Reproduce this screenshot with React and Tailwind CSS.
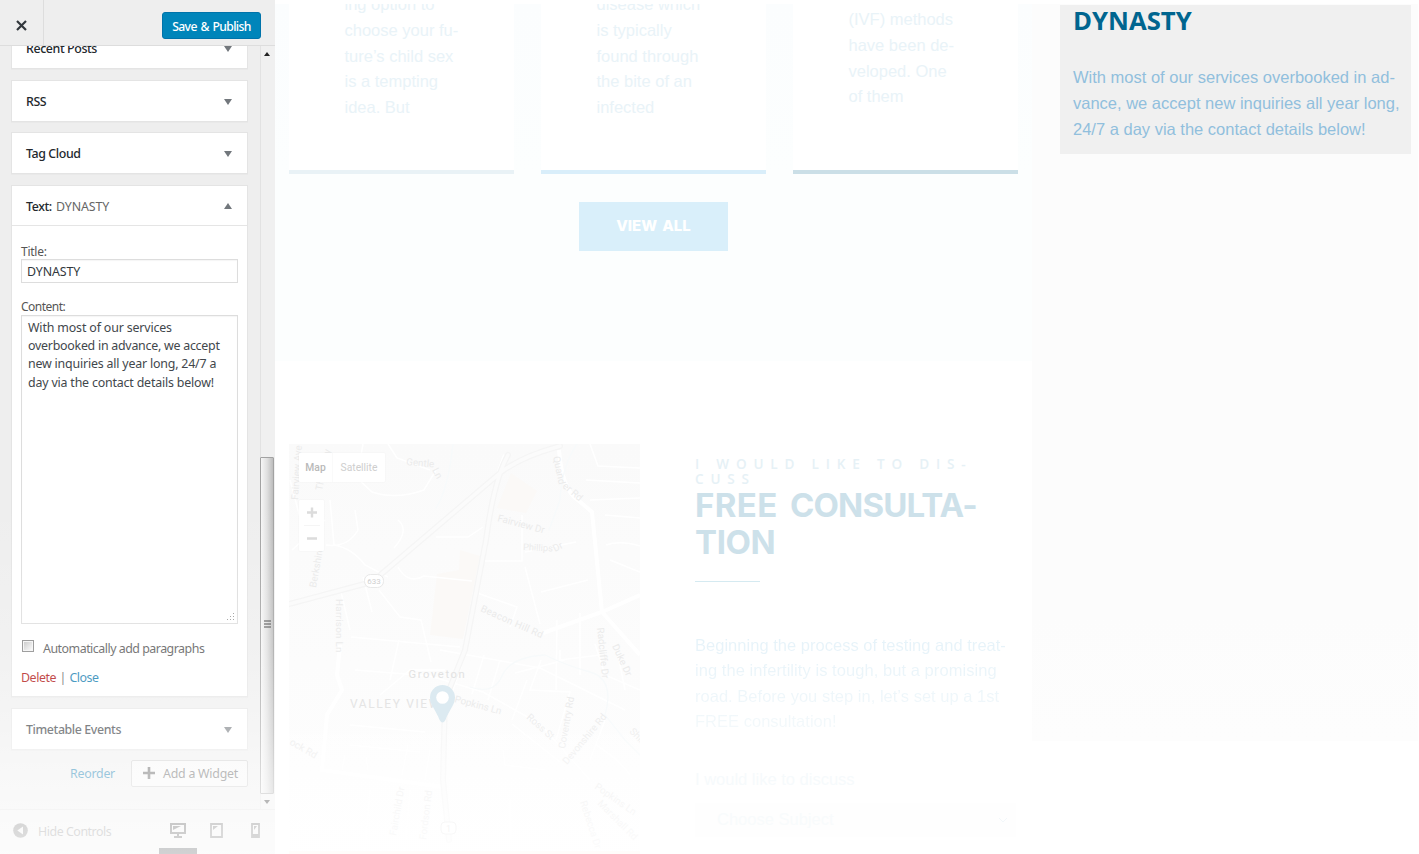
import React from "react";

const Arrow = ({ up }) => (
  <svg className={up ? "h-[6px] w-[8px] shrink-0" : "mt-px h-[6px] w-[8px] shrink-0"} viewBox="0 0 8 6">
    <path d={up ? "M0 6 4 0 8 6Z" : "M0 0H8L4 6Z"} fill="#72777c" />
  </svg>
);

const WidgetHead = ({ label, name, up }) => (
  <div className="flex h-[40px] items-center justify-between pr-[15px] pl-[14px]">
    <span className="pt-[2px] text-[12.4px] font-medium tracking-[-0.4px] text-[#23282d]">
      {label}
      {name && <span className="ml-px font-normal tracking-[-0.1px] text-[#666]"> {name}</span>}
    </span>
    <Arrow up={up} />
  </div>
);

const Card = ({ children, className = "" }) => (
  <div className={`shrink-0 border border-[#e4e4e4] bg-white shadow-[0_1px_1px_rgba(0,0,0,0.02)] ${className}`}>{children}</div>
);

function Sidebar() {
  return (
    <aside className="relative flex h-[854px] w-[275px] shrink-0 flex-col bg-[#eee] font-['Noto_Sans',sans-serif] text-[12.4px] tracking-[-0.25px] text-[#555]">
      <header className="flex h-[46px] shrink-0 items-stretch justify-between border-b border-[#ddd]">
        <button className="flex w-[44px] items-center justify-center border-r border-[#ddd] pt-[5px]">
          <svg className="h-[11px] w-[11px]" viewBox="0 0 11 11">
            <path d="M1 1 10 10M10 1 1 10" stroke="#32373c" strokeWidth="2.2" />
          </svg>
        </button>
        <button className="mt-[12px] mr-[14px] flex h-[27px] w-[99px] items-center justify-center rounded-[3px] border border-[#0073aa] bg-[#0085ba] pt-[3px] text-[12.2px] font-medium tracking-[-0.65px] whitespace-nowrap text-white [word-spacing:1.2px]">
          Save &amp; Publish
        </button>
      </header>

      <div className="flex h-[763px] shrink-0">
        <div className="flex w-[260px] flex-col overflow-hidden pl-[11px]">
          <Card className="-mt-[19px] h-[42px] w-[237px]"><WidgetHead label="Recent Posts" /></Card>
          <Card className="mt-[11px] h-[42px] w-[237px]"><WidgetHead label="RSS" /></Card>
          <Card className="mt-[10px] h-[42px] w-[237px]"><WidgetHead label="Tag Cloud" /></Card>
          <Card className="mt-[11px] h-[512px] w-[237px]">
            <WidgetHead label="Text:" name="DYNASTY" up />
            <div className="-mt-px flex flex-col border-t border-[#e5e5e5] px-[9px] pt-[17px]">
              <label className="h-[16px] text-[12px] leading-[17px]">Title:</label>
              <div className="h-[24px] border border-[#ddd] pl-[5px] leading-[24px] tracking-[-0.1px] text-[#32373c] shadow-[inset_0_1px_1px_rgba(0,0,0,0.04)]">DYNASTY</div>
              <label className="mt-[15px] h-[16px] text-[12px] leading-[17px] tracking-[-0.5px]">Content:</label>
              <div className="relative mt-[1px] h-[309px] border border-[#ddd] pt-[3px] pl-[6px] leading-[18.2px] whitespace-nowrap text-[#42474c] shadow-[inset_0_1px_1px_rgba(0,0,0,0.04)]">
                <p className="tracking-[-0.15px]">With most of our services</p>
                <p>overbooked in advance, we accept</p>
                <p className="tracking-[-0.19px]">new inquiries all year long, 24/7 a</p>
                <p className="tracking-[-0.18px]">day via the contact details below!</p>
                <svg className="absolute right-[2px] bottom-[2px] h-[8px] w-[8px]" viewBox="0 0 8 8">
                  <path d="M6 0h1v1H6zM3 3h1v1H3zM6 3h1v1H6zM0 6h1v1H0zM3 6h1v1H3zM6 6h1v1H6z" fill="#999" />
                </svg>
              </div>
              <div className="mt-[15px] flex h-[19px] items-start">
                <span className="mt-px ml-px h-[12px] w-[12px] border border-[#858585] bg-gradient-to-br from-[#bbb] to-white shadow-[inset_0_0_0_1px_#f4f4f4]" />
                <span className="ml-[9px] leading-[19px] tracking-[-0.49px] whitespace-nowrap">Automatically add paragraphs</span>
              </div>
              <div className="mt-[10px] leading-[19px] tracking-[-0.45px]">
                <span className="text-[#a00]">Delete</span><span className="mx-[3.5px]">|</span><span className="text-[#0073aa]">Close</span>
              </div>
            </div>
          </Card>
          <Card className="mt-[11px] h-[42px] w-[237px]"><WidgetHead label="Timetable Events" /></Card>
          <div className="mt-[10px] flex h-[27px] w-[237px] items-center justify-end">
            <span className="mr-[16px] pt-[2px] text-[#0073aa]">Reorder</span>
            <button className="flex h-[27px] w-[117px] items-center rounded-[2px] border border-[#ccc] bg-[#f7f7f7] pl-[11px] whitespace-nowrap">
              <svg className="mr-[8px] mb-[2px] h-[12px] w-[12px]" viewBox="0 0 12 12">
                <path d="M6 0V12M0 6H12" stroke="#555" strokeWidth="2.6" />
              </svg>
              <span className="pt-[2px]">Add a Widget</span>
            </button>
          </div>
        </div>
        <div className="flex w-[15px] flex-col items-start bg-[#f0f0f0] shadow-[inset_1px_0_#e2e2e2]">
          <svg className="mt-[6px] ml-[4px] h-[4px] w-[6px] shrink-0" viewBox="0 0 6 4"><path d="M0 4 3 0 6 4Z" fill="#222" /></svg>
          <div className="mt-[401px] flex h-[337px] w-[14px] shrink-0 items-center justify-center rounded-[1px] border border-[#a2a2a2] bg-gradient-to-r from-[#f6f6f6] via-[#e0e0e0] to-[#bcbcbc]">
            <svg className="mb-[3px] h-[8px] w-[7px]" viewBox="0 0 7 8"><path d="M0 1H7M0 4H7M0 7H7" stroke="#333" strokeWidth="1.2" /></svg>
          </div>
          <svg className="mt-[6px] ml-[4px] h-[4px] w-[6px] shrink-0" viewBox="0 0 6 4"><path d="M0 0H6L3 4Z" fill="#222" /></svg>
        </div>
      </div>

      <footer className="flex h-[45px] shrink-0 items-start border-t border-[#ddd] pl-[13px]">
        <svg className="mt-[13px] h-[15px] w-[15px]" viewBox="0 0 15 15">
          <circle cx="7.5" cy="7.5" r="7.3" fill="#666" />
          <path d="M10 3.5V11.5L4.3 7.5Z" fill="#eee" />
        </svg>
        <span className="ml-[10px] w-[78px] pt-[12px] leading-[19px] tracking-[-0.45px] whitespace-nowrap text-[#777]">Hide Controls</span>
        <div className="ml-[43px] flex h-[44px] w-[38px] flex-col items-center border-b-[6px] border-[#191e23] pt-[13px]">
          <svg className="h-[15px] w-[16px]" viewBox="0 0 16 15">
            <path d="M1 1H15V10H1Z" fill="none" stroke="#333" strokeWidth="2" />
            <path d="M3 3H11L3 7ZM7 10H9V13H12V15H4V13H7Z" fill="#333" />
          </svg>
        </div>
        <svg className="mt-[13px] ml-[13px] h-[15px] w-[13px]" viewBox="0 0 13 15">
          <path d="M1 1H12V14H1Z" fill="none" stroke="#555" strokeWidth="1.8" />
          <path d="M3 3H8L3 7Z" fill="#555" />
        </svg>
        <svg className="mt-[13px] ml-[28px] h-[15px] w-[9px]" viewBox="0 0 9 15">
          <path d="M1 1H8V14H1Z" fill="none" stroke="#555" strokeWidth="1.8" />
          <path d="M3 3H6L3 7ZM1 11H8V14H1Z" fill="#555" />
        </svg>
      </footer>
      <div className="pointer-events-none absolute inset-0 bg-[linear-gradient(to_bottom,transparent_500px,rgba(255,255,255,0.2)_648px,rgba(255,255,255,0.43)_729px,rgba(255,255,255,0.6)_774px,rgba(255,255,255,0.76)_831px,rgba(255,255,255,0.8)_854px)]" />
    </aside>
  );
}

const Service = ({ lines, bar, pad, mid }) => (
  <article className={`flex h-[170px] flex-col border-b-[4px] bg-white pl-[55.5px] font-['Liberation_Sans',sans-serif] text-[16.5px] leading-[25.8px] whitespace-nowrap text-[#e9f3f8] ${bar} ${pad} ${mid}`}>
    {lines.map((l) => <p key={l}>{l}</p>)}
  </article>
);

function MapView() {
  const lbl = { fill: "#ebebeb", fontFamily: "Roboto, sans-serif", fontSize: 9.8 };
  return (
    <div className="relative h-[410px] w-[351px] shrink-0">
      <svg className="block h-[410px] w-[351px]" viewBox="289 444 351 410">
        <defs>
          <linearGradient id="land" x1="0" y1="0" x2="0" y2="1">
            <stop offset="0" stopColor="#fafafa" />
            <stop offset="0.8" stopColor="#fdfdfd" />
            <stop offset="1" stopColor="#fefefe" />
          </linearGradient>
          <linearGradient id="veil" x1="0" y1="0" x2="0" y2="1">
            <stop offset="0" stopColor="#fff" stopOpacity="0" />
            <stop offset="0.4" stopColor="#fff" stopOpacity="0.45" />
            <stop offset="1" stopColor="#fff" stopOpacity="0.8" />
          </linearGradient>
        </defs>
        <rect x="289" y="444" width="351" height="410" fill="url(#land)" />
        <path d="M511 473 537 491 526 513 497 508ZM437 574 459 570 460 550 480 556 463 639 430 635Z" fill="#fbf9f7" />
        <g fill="none" stroke="#fff" strokeWidth="1.5">
          <path d="M363 444 357 478 372 492Q396 500 424 490L436 470M388 444 397 458 430 470M330 500 334 545Q352 548 365 565L388 577M398 567Q408 585 424 576L472 581M341 592 350 630M363 577 372 612M379 590 400 617 421 620 431 662M351 637 460 647M436 537H468L483 527M485 561H522L522 515M525 567 540 624M525 552 576 542M541 592 588 580M477 593 517 607 510 627M590 444 598 466 640 468M586 480 640 483M590 500 640 498M605 515 640 518M606 545Q620 540 640 546M610 560 640 572M557 620 556 690M580 613V675M290 480 306 540M292 550 325 520M326 545Q348 548 358 530L355 510M398 520Q410 530 394 548" />
          <path d="M355 670 430 676 483 692 540 724M399 640 390 680M380 695 410 670 445 670M440 650 540 668 625 710M465 655 453 690M484 655 472 694M500 660 488 700M515 673 565 660M527 680 512 720M541 660 530 690 570 692 556 740M560 650V660L600 655M595 644 605 675 640 690M617 650 625 690M350 725 425 732M350 745 420 752M345 755 342 770M366 757 368 770M408 745 402 775M430 750 425 780M503 750 505 765 545 770M540 724 590 780M605 720 590 760M596 745Q620 760 630 775M512 724 560 762M370 790 365 850M410 790 405 850M510 800V840" />
        </g>
        <g fill="none" stroke="#fff" strokeWidth="4">
          <path d="M559 450Q562 490 578 500L592 512 602 612 640 655M543 633 602 612 640 595M505 455 497 477M340 645 337 675 342 690 327 715 322 770 443 787" />
        </g>
        <g fill="none" strokeLinecap="round">
          <path d="M289 604 372 582 500 473Q520 457 560 446M508 455Q494 480 486 540L465 650 445 700 443 780 449 840" stroke="#f5f5f5" strokeWidth="6" />
          <path d="M289 604 372 582 500 473Q520 457 560 446M508 455Q494 480 486 540L465 650 445 700 443 780 449 840" stroke="#fbfbfb" strokeWidth="3.5" />
          <path d="M453 444Q448 490 436 508M577 444Q562 465 560 500L549 530M470 687Q494 695 502 676T545 655Q565 665 590 672T605 715L625 740 640 755" stroke="#f7fafb" strokeWidth="1.3" />
        </g>
        <g style={lbl}>
          <text x="406" y="465" transform="rotate(5 406 465)">Gentle</text>
          <text x="432" y="470" transform="rotate(62 432 470)">Ln</text>
          <text x="553" y="457" transform="rotate(78 553 457)">Quand</text>
          <text x="562" y="487" transform="rotate(40 562 487)">er Rd</text>
          <text x="497" y="521" transform="rotate(15 497 521)">Fairview Dr</text>
          <text x="523" y="550" fontSize="9.200" transform="rotate(3 523 550)">Phillips</text>
          <text x="555" y="552" transform="rotate(-28 555 552)">Dr</text>
          <text x="480" y="611" transform="rotate(24 480 611)" letterSpacing="0.3">Beacon Hill Rd</text>
          <text x="336" y="599" transform="rotate(90 336 599)" letterSpacing="0.3">Harrison Ln</text>
          <text x="316" y="588" transform="rotate(-80 316 588)">Berkshire</text>
          <text x="298" y="500" transform="rotate(-86 298 500)">Fairview Ave</text>
          <text x="322" y="491" transform="rotate(-78 322 491)">The Pkwy</text>
          <text x="597" y="628" transform="rotate(84 597 628)">Radcliffe Dr</text>
          <text x="612" y="646" transform="rotate(65 612 646)">Duke Dr</text>
          <text x="454" y="702" transform="rotate(15 454 702)">Popkins Ln</text>
          <text x="526" y="718" transform="rotate(42 526 718)">Ross St</text>
          <text x="565" y="749" transform="rotate(-80 565 749)">Coventry Rd</text>
          <text x="567" y="765" transform="rotate(-50 567 765)">Devonshire Rd</text>
          <text x="289" y="744" transform="rotate(30 289 744)">ock Rd</text>
          <text x="629" y="732" transform="rotate(45 629 732)">Shir</text>
          <text x="396" y="836" transform="rotate(-80 396 836)">Fairchild Dr</text>
          <text x="426" y="840" transform="rotate(-83 426 840)">Fordson Rd</text>
          <text x="594" y="788" transform="rotate(35 594 788)">Popkins Ln</text>
          <text x="597" y="804" transform="rotate(45 597 804)">Marshall Rd</text>
          <text x="580" y="802" transform="rotate(72 580 802)">Rebecca Dr</text>
          <text x="408.500" y="678" fontSize="11.200" letterSpacing="1.600" fill="#e2e2e2">Groveton</text>
          <text x="350" y="708" fontSize="12" letterSpacing="1.6" fill="#e4e4e4">VALLEY VIEW</text>
        </g>
        <rect x="364.500" y="574.500" width="19" height="13" rx="6" fill="#fff" stroke="#e8e8e8" />
        <text x="374" y="584" textAnchor="middle" fontFamily="Roboto" fontSize="8" fill="#d0d0d0">633</text>
        <rect x="441" y="822" width="15" height="12" rx="4" fill="#fff" stroke="#e6e6e6" />
        <text x="448.500" y="831.500" textAnchor="middle" fontFamily="Roboto" fontSize="9" fill="#ddd">1</text>
        <rect x="289" y="700" width="351" height="154" fill="url(#veil)" />
        <path d="M442.500 685a12.500 12.500 0 0 1 12.500 12.500c0 7-6 13-9.600 22.500q-2.900 5-5.800 0c-3.600-9.500-9.600-15.500-9.600-22.500A12.500 12.500 0 0 1 442.500 685Z" fill="#dceaf1" />
        <circle cx="442.500" cy="697.500" r="6.300" fill="#fff" />
        <rect x="289" y="851" width="351" height="3" fill="#fffcfa" />
      </svg>
      <div className="absolute top-[9px] left-[10px] flex h-[29px] w-[86px] items-center rounded-[1px] bg-white font-['Roboto',sans-serif] text-[10.3px] shadow-[0_0_2px_rgba(0,0,0,0.06)]">
        <span className="flex h-full w-[34px] items-center justify-center border-r border-[#fafafa] pt-px font-medium text-[#b9b9b9]">Map</span>
        <span className="flex-1 pt-px text-center text-[#cecece]">Satellite</span>
      </div>
      <div className="absolute top-[56px] left-[10px] flex h-[51px] w-[25px] flex-col items-center rounded-[1px] bg-white shadow-[0_0_2px_rgba(0,0,0,0.06)]">
        <svg className="h-[51px] w-[25px]" viewBox="0 0 25 51">
          <path d="M8 12.500H18M13 7.500V17.500M8 38.500H18" stroke="#dcdcdc" strokeWidth="2.4" />
          <path d="M5 25.500H21" stroke="#f5f5f5" />
        </svg>
      </div>
    </div>
  );
}

export default function App() {
  return (
    <div className="flex h-[854px] w-[1419px] overflow-hidden bg-white">
      <Sidebar />
      <main className="flex w-[757px] shrink-0 flex-col pt-[4px]">
        <section className="flex h-[357px] shrink-0 flex-col bg-[linear-gradient(to_bottom,#fbfdfe,#fcfefe_170px,#fcfefe)]">
          <div className="grid h-[170px] grid-cols-[225px_225px_225px] gap-x-[27px] overflow-hidden pl-[14px]">
            <Service lines={["ing option to", "choose your fu-", "ture’s child sex", "is a tempting", "idea. But"]} bar="border-[#e9f2f6]" pad="pt-0" mid="[&>p:first-child]:-mt-[12px]" />
            <Service lines={["disease which", "is typically", "found through", "the bite of an", "infected"]} bar="border-[#d9eefa]" pad="pt-0" mid="[&>p:first-child]:-mt-[12px]" />
            <Service lines={["(IVF) methods", "have been de-", "veloped. One", "of them"]} bar="border-[#cbdfe7]" pad="pt-[3px]" mid="" />
          </div>
          <button className="mt-[28px] ml-[304px] flex h-[49px] w-[149px] items-center justify-center bg-[#d9effa] font-['Inter',sans-serif] text-[15px] font-extrabold text-white [word-spacing:2px]">VIEW ALL</button>
        </section>
        <section className="flex h-[493px] shrink-0 items-start bg-white pt-[83px] pl-[14px]">
          <MapView />
          <div className="flex w-[390px] shrink-0 flex-col pt-[13px] pl-[55px] whitespace-nowrap">
            <div className="h-[30px] font-['Open_Sans',sans-serif] text-[13.5px] leading-[14.5px] font-semibold tracking-[6.85px] text-[#e6f1f6]">
              <p>I WOULD LIKE TO DIS-</p>
              <p>CUSS</p>
            </div>
            <h2 className="font-['Inter',sans-serif] text-[33px] leading-[36.5px] font-bold text-[#cde1ea]">
              <p><span className="tracking-[0.4px]">FREE </span><span className="ml-[4px] tracking-[-0.85px]">CONSULTA-</span></p>
              <p className="tracking-[-0.4px]">TION</p>
            </h2>
            <div className="mt-[21px] h-px w-[65px] bg-[#d5eaf1]" />
            <div className="mt-[51px] w-[335px] bg-gradient-to-b from-[#e5f2f9] to-[#f4f9fb] bg-clip-text font-['Liberation_Sans',sans-serif] text-[16.5px] leading-[25.4px] tracking-[0.02px] text-transparent">
              <p>Beginning the process of testing and treat-</p>
              <p className="tracking-[0.06px]">ing the infertility is tough, but a promising</p>
              <p>road. Before you step in, let’s set up a 1st</p>
              <p>FREE consultation!</p>
            </div>
            <p className="mt-[32px] font-['Liberation_Sans',sans-serif] text-[16.5px] leading-[25px] text-[#f6fafc]">I would like to discuss</p>
            <div className="mt-[11px] flex h-[34px] w-[321px] items-center justify-between bg-[#fefefe] pr-[8px] pl-[22px] font-['Liberation_Sans',sans-serif] text-[16.5px] text-[#f8fbfc]">
              Choose Subject
              <svg className="h-[6px] w-[10px]" viewBox="0 0 10 6"><path d="M1 1 5 5 9 1" fill="none" stroke="#f2f7fa" /></svg>
            </div>
          </div>
        </section>
      </main>
      <aside className="mt-[4px] h-[737px] w-[386px] shrink-0 bg-[linear-gradient(to_bottom,#fcfcfc,#fcfcfc_610px,#fdfdfd)] pt-px pl-[28px]">
        <div className="h-[149px] w-[351px] bg-[#f0f0f0] pl-[13px] whitespace-nowrap">
          <h3 className="h-[30px] font-['Open_Sans',sans-serif] text-[25.7px] leading-[31px] font-bold text-[#00658f]">DYNASTY</h3>
          <div className="pt-[30px] font-['Liberation_Sans',sans-serif] text-[16.5px] leading-[25.8px] text-[#91bfdd]">
            <p>With most of our services overbooked in ad-</p>
            <p>vance, we accept new inquiries all year long,</p>
            <p>24/7 a day via the contact details below!</p>
          </div>
        </div>
      </aside>
    </div>
  );
}
